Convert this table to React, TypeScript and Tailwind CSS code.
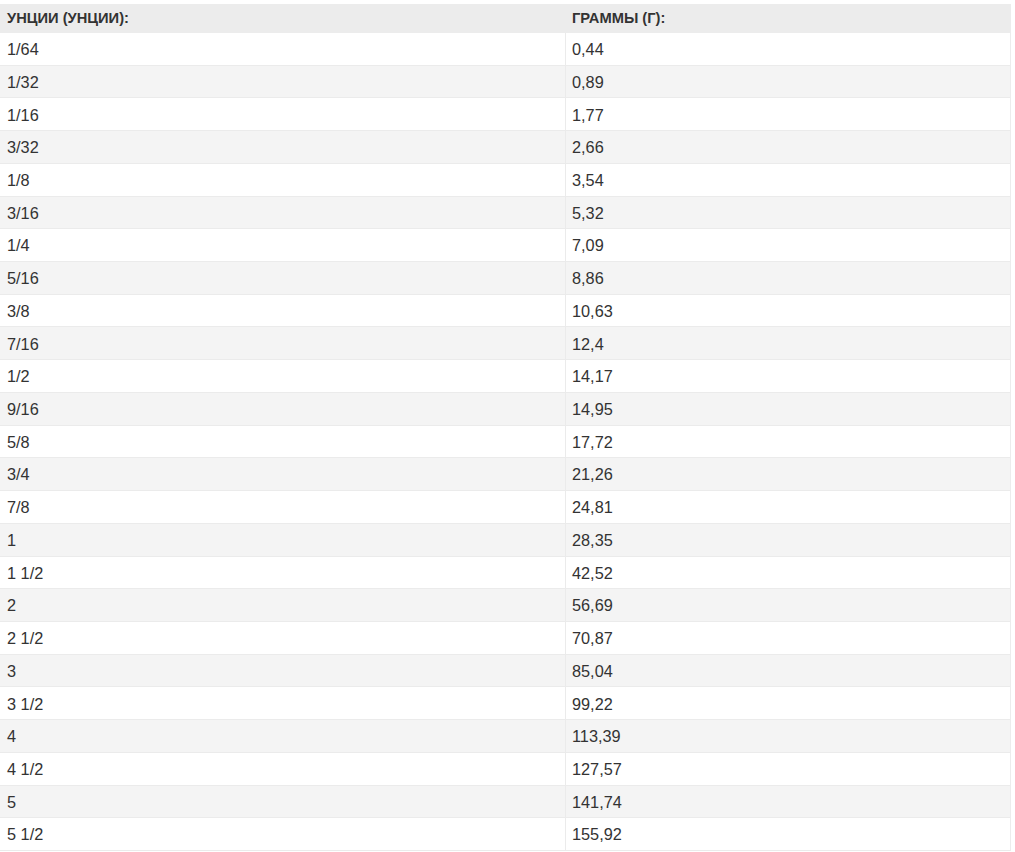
import React from "react";

const rows: [string, string][] = [
  ["1/64", "0,44"],
  ["1/32", "0,89"],
  ["1/16", "1,77"],
  ["3/32", "2,66"],
  ["1/8", "3,54"],
  ["3/16", "5,32"],
  ["1/4", "7,09"],
  ["5/16", "8,86"],
  ["3/8", "10,63"],
  ["7/16", "12,4"],
  ["1/2", "14,17"],
  ["9/16", "14,95"],
  ["5/8", "17,72"],
  ["3/4", "21,26"],
  ["7/8", "24,81"],
  ["1", "28,35"],
  ["1 1/2", "42,52"],
  ["2", "56,69"],
  ["2 1/2", "70,87"],
  ["3", "85,04"],
  ["3 1/2", "99,22"],
  ["4", "113,39"],
  ["4 1/2", "127,57"],
  ["5", "141,74"],
  ["5 1/2", "155,92"],
];

export default function App() {
  return (
    <div className="min-h-screen bg-white pt-[4px] text-[#333] font-['Liberation_Sans',Arial,sans-serif]">
      <div className="w-[1011px] border-r border-[#ececec]">
        <div className="flex h-[29px] items-center bg-[#ececec] text-[14.7px] font-bold uppercase">
          <div className="w-[565px] pl-[7px]">Унции (унции):</div>
          <div className="flex-1 pl-[7px]">Граммы (г):</div>
        </div>
        {rows.map(([oz, g], i) => (
          <div
            key={oz}
            className={
              "flex h-[32.72px] border-b border-[#ebebeb] text-[16.3px] " +
              (i % 2 === 0 ? "bg-white" : "bg-[#f4f4f4]")
            }
          >
            <div className="flex w-[565px] items-center pt-[1px] pl-[7px]">{oz}</div>
            <div className="flex flex-1 items-center border-l border-[#ebebeb] pt-[1px] pl-[6px]">{g}</div>
          </div>
        ))}
      </div>
    </div>
  );
}
